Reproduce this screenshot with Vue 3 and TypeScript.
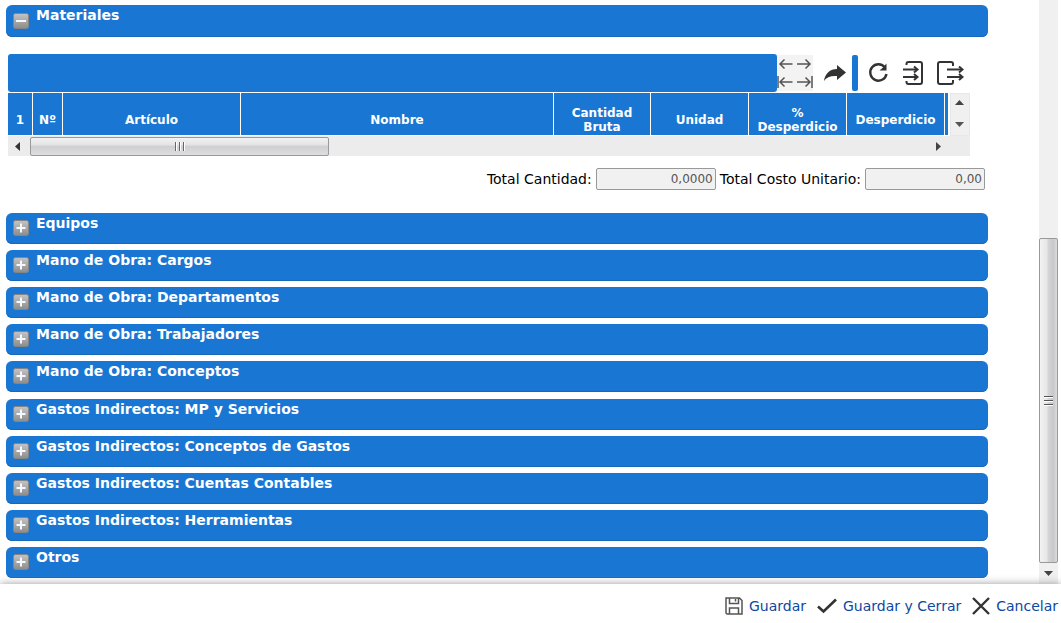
<script setup lang="ts">
import { ref } from 'vue'

interface Column {
  label: string
  kind: string
}

const columns: Column[] = [
  { label: '1', kind: 'index' },
  { label: 'Nº', kind: 'number' },
  { label: 'Artículo', kind: 'article' },
  { label: 'Nombre', kind: 'name' },
  { label: 'Cantidad\nBruta', kind: 'amount' },
  { label: 'Unidad', kind: 'measure' },
  { label: '%\nDesperdicio', kind: 'measure' },
  { label: 'Desperdicio', kind: 'measure' },
  { label: '', kind: 'rest' },
]

const sections: string[] = [
  'Equipos',
  'Mano de Obra: Cargos',
  'Mano de Obra: Departamentos',
  'Mano de Obra: Trabajadores',
  'Mano de Obra: Conceptos',
  'Gastos Indirectos: MP y Servicios',
  'Gastos Indirectos: Conceptos de Gastos',
  'Gastos Indirectos: Cuentas Contables',
  'Gastos Indirectos: Herramientas',
  'Otros',
]

const totalQuantity = ref('0,0000')
const totalCost = ref('0,00')
</script>

<template>
  <div class="screen">
    <div class="viewport">
      <main class="content">
        <button class="bar open" type="button" aria-expanded="true">
          <svg class="toggle" viewBox="0 0 16 16" aria-hidden="true">
            <defs>
              <linearGradient id="toggle-face" x1="0" y1="0" x2="0" y2="1">
                <stop offset="0" stop-color="#c4c4c4" />
                <stop offset="1" stop-color="#8c8c8c" />
              </linearGradient>
            </defs>
            <rect x="0.5" y="0.5" width="15" height="15" rx="2" fill="url(#toggle-face)" stroke="#858585" />
            <path d="M3 8H13" stroke="#f4f8ff" stroke-width="2" />
          </svg>
          <span>Materiales</span>
        </button>

        <section class="materials">
          <div class="toolbar">
            <div class="caption"></div>
            <div class="widths">
              <button type="button" aria-label="Reducir">
                <svg viewBox="0 0 18 18"><path d="M15.500 9H3M7.500 4.500L3 9L7.500 13.500" /></svg>
              </button>
              <button type="button" aria-label="Ampliar">
                <svg viewBox="0 0 18 18"><path d="M2 9H15M10.500 4.500L15 9L10.500 13.500" /></svg>
              </button>
              <button type="button" aria-label="Mínimo">
                <svg viewBox="0 0 18 18"><path d="M15.500 9H3M7.500 4.500L3 9L7.500 13.500M1 3V15" /></svg>
              </button>
              <button type="button" aria-label="Máximo">
                <svg viewBox="0 0 18 18"><path d="M2 9H15M10.500 4.500L15 9L10.500 13.500M17 3V15" /></svg>
              </button>
            </div>
            <button class="tool share" type="button" aria-label="Compartir">
              <svg width="24" height="18" viewBox="0 0 24 18">
                <path d="M14 1L23 8.500L14 16V12C8 11.500 3.500 13 1 17C2 9.500 7 5 14 5Z" fill="#333" />
              </svg>
            </button>
            <span class="divider"></span>
            <button class="tool" type="button" aria-label="Actualizar">
              <svg width="22" height="22" viewBox="0 0 22 22">
                <path d="M17 5.500A8.200 8.200 0 1 0 18.500 12" fill="none" stroke="#333" stroke-width="2.400" />
                <path d="M11.500 8.500L15 5.500L18.500 1.500V8.500Z" fill="#333" />
              </svg>
            </button>
            <button class="tool" type="button" aria-label="Importar">
              <svg width="22" height="26" viewBox="0 0 22 26" fill="none" stroke="#333" stroke-width="2">
                <path d="M4.500 5V4Q4.500 2 6.500 2H18Q20 2 20 4V22Q20 24 18 24H6.500Q4.500 24 4.500 22V21M1 9.500H15M1 17H15" />
                <path d="M12 6.500L15.500 9.500L12 12.500M12 14L15.500 17L12 20" />
              </svg>
            </button>
            <button class="tool" type="button" aria-label="Exportar">
              <svg width="28" height="26" viewBox="0 0 28 26" fill="none" stroke="#333" stroke-width="2">
                <path d="M17 6V4Q17 2 15 2H4Q2 2 2 4V22Q2 24 4 24H15Q17 24 17 22V20M11 9.500H26M11 17H26" />
                <path d="M23 6.500L26.500 9.500L23 12.500M23 14L26.500 17L23 20" />
              </svg>
            </button>
          </div>

          <div class="grid">
            <table>
              <colgroup>
                <col v-for="(column, i) in columns" :key="i" :class="column.kind" />
              </colgroup>
              <thead>
                <tr>
                  <th v-for="(column, i) in columns" :key="i" scope="col">{{ column.label }}</th>
                </tr>
              </thead>
            </table>
            <div class="vscroll">
              <svg width="9" height="5" viewBox="0 0 9 5"><path d="M4.500 0L9 5H0Z" fill="#444" /></svg>
              <svg width="9" height="5" viewBox="0 0 9 5"><path d="M0 0H9L4.500 5Z" fill="#555" /></svg>
            </div>
          </div>

          <div class="hscroll">
            <svg width="5" height="9" viewBox="0 0 5 9"><path d="M5 0V9L0 4.500Z" fill="#333" /></svg>
            <div class="track">
              <div class="thumb">
                <svg width="11" height="9" viewBox="0 0 11 9" stroke="#666">
                  <path d="M1.500 0V9M5.500 0V9M9.500 0V9" />
                  <path d="M2.500 0V9M6.500 0V9M10.500 0V9" stroke="#fff" />
                </svg>
              </div>
            </div>
            <svg width="5" height="9" viewBox="0 0 5 9"><path d="M0 0V9L5 4.500Z" fill="#444" /></svg>
          </div>
        </section>

        <div class="totals">
          <label for="total-quantity">Total Cantidad:</label>
          <input id="total-quantity" v-model="totalQuantity" type="text" readonly />
          <label for="total-cost">Total Costo Unitario:</label>
          <input id="total-cost" v-model="totalCost" type="text" readonly />
        </div>

        <div class="sections">
          <button v-for="title in sections" :key="title" class="bar" type="button" aria-expanded="false">
            <svg class="toggle" viewBox="0 0 16 16" aria-hidden="true">
              <rect x="0.5" y="0.5" width="15" height="15" rx="2" fill="url(#toggle-face)" stroke="#858585" />
              <path d="M3.500 8H12.500M8 3.500V12.500" stroke="#f4f8ff" stroke-width="2" />
            </svg>
            <span>{{ title }}</span>
          </button>
        </div>
      </main>

      <div class="page-scroll">
        <div class="page-thumb">
          <svg width="9" height="11" viewBox="0 0 9 11">
            <path d="M0 1.500H9M0 5.500H9M0 9.500H9" stroke="#555" />
            <path d="M0 2.500H9M0 6.500H9M0 10.500H9" stroke="#fff" />
          </svg>
        </div>
        <svg class="down" width="9" height="5" viewBox="0 0 9 5"><path d="M0 0H9L4.500 5Z" fill="#444" /></svg>
      </div>
    </div>

    <footer class="actions">
      <a href="#guardar">
        <svg width="18" height="18" viewBox="0 0 18 18" fill="none" stroke="#555" stroke-width="1.500">
          <path d="M1 1H14.500L17 3.500V17H2L1 16ZM4.500 1V6.500H13.500V1M10.500 2V4.500M4.500 17V11H13.500V17" />
        </svg>
        <span>Guardar</span>
      </a>
      <a href="#guardar-cerrar">
        <svg width="20" height="16" viewBox="0 0 20 16" fill="none" stroke="#333" stroke-width="2.600">
          <path d="M1 8.500L6.500 13.500L19 1.500" />
        </svg>
        <span>Guardar y Cerrar</span>
      </a>
      <a href="#cancelar">
        <svg width="18" height="18" viewBox="0 0 18 18" fill="none" stroke="#333" stroke-width="2.400">
          <path d="M1 1L17 17M17 1L1 17" />
        </svg>
        <span>Cancelar</span>
      </a>
    </footer>
  </div>
</template>

<style>
body {
  margin: 0;
  background: #fff;
}
</style>

<style scoped>
.screen {
  display: flex;
  flex-direction: column;
  min-height: 100vh;
  font-family: Verdana, "DejaVu Sans", sans-serif;
  font-size: 14px;
  color: #000;
}
.screen * {
  box-sizing: border-box;
}
button {
  font: inherit;
  border: 0;
  padding: 0;
  background: none;
  cursor: pointer;
}
svg {
  display: block;
  flex: none;
}
.viewport {
  flex: 1;
  display: flex;
  padding-right: 3px;
}
.content {
  flex: 1;
  min-width: 0;
  display: flex;
  flex-direction: column;
  padding: 5px 51px 6px 6px;
}
.bar {
  display: flex;
  align-items: flex-start;
  gap: 7px;
  width: 100%;
  height: 31px;
  padding: 0 8px 0 7px;
  border-radius: 6px;
  background: #1976d3;
  box-shadow: inset 0 -1px 0 #1768ba;
  color: #fff;
  font-size: 14px;
  font-weight: bold;
  line-height: 20px;
  text-align: left;
}
.bar.open {
  height: 32px;
}
.toggle {
  width: 16px;
  height: 16px;
  margin-top: 7px;
}
.open .toggle {
  margin-top: 8px;
}
.materials {
  margin: 17px 18px 0 2px;
}
.toolbar {
  display: flex;
  align-items: center;
  height: 38px;
  margin-bottom: 1px;
}
.caption {
  flex: 1;
  height: 38px;
  border-radius: 3px;
  background: #1976d3;
}
.widths {
  display: grid;
  grid-template-columns: 18px 18px;
  grid-template-rows: 18px 18px;
}
.widths button {
  background: #f3f3f3;
}
.widths svg {
  width: 18px;
  height: 18px;
  fill: none;
  stroke: #555;
  stroke-width: 1.5;
}
.tool {
  margin-right: 12px;
}
.share {
  margin: 0 5px 0 10px;
}
.divider {
  width: 6px;
  height: 36px;
  margin-right: 10px;
  border-radius: 2px;
  background: #1976d3;
}
.tool:last-child {
  margin-right: 6px;
}
.grid {
  display: flex;
  gap: 2px;
  height: 43px;
}
table {
  flex: 1;
  width: 100%;
  height: 42px;
  table-layout: fixed;
  border-collapse: separate;
  border-spacing: 0;
}
.index {
  width: 25px;
}
.number {
  width: 30px;
}
.article {
  width: 178px;
}
.amount {
  width: 97px;
}
.measure {
  width: 98px;
}
.rest {
  width: 3px;
}
th {
  height: 42px;
  padding: 12px 0 0;
  border-right: 1px solid #fff;
  background: #1976d3;
  color: #fff;
  font-size: 12px;
  line-height: 14px;
  vertical-align: middle;
  white-space: pre-line;
}
th:last-child {
  border-right: 0;
}
.vscroll {
  display: flex;
  flex-direction: column;
  align-items: center;
  justify-content: space-between;
  width: 20px;
  padding: 6px 1px 8px 0;
  border: 1px solid #e8e8e8;
  background: #f0f0f0;
}
.hscroll {
  display: flex;
  align-items: center;
  height: 20px;
  padding: 0 29px 0 7px;
  background: #ececec;
}
.track {
  flex: 1;
  padding: 0 0 0 10px;
}
.thumb {
  display: flex;
  align-items: center;
  justify-content: center;
  width: 33%;
  height: 19px;
  border: 1px solid #999;
  border-radius: 2px;
  background: linear-gradient(#f2f2f2, #e4e4e5 40%, #cfcfd1 50%, #dedee0);
}
.totals {
  display: flex;
  align-items: center;
  justify-content: flex-end;
  gap: 4px;
  margin: 12px 3px 23px 0;
  line-height: 20px;
}
.totals input {
  width: 120px;
  height: 22px;
  padding: 0 2px;
  border: 1px solid #999;
  border-radius: 2px;
  background: #f1f1f1;
  color: #555;
  font: 12px Verdana, "DejaVu Sans", sans-serif;
  text-align: right;
}
.sections {
  flex: 1;
  display: flex;
  flex-direction: column;
  justify-content: space-between;
  gap: 6px;
}
.page-scroll {
  display: flex;
  flex-direction: column;
  align-items: center;
  width: 19px;
  background: #f0f0f0;
}
.page-thumb {
  display: flex;
  align-items: center;
  justify-content: center;
  width: 19px;
  height: 325px;
  margin-top: auto;
  border: 1px solid #999;
  border-radius: 2px;
  background: linear-gradient(90deg, #f3f3f3, #e6e6e7 40%, #d4d4d7 50%, #c8c8cc 80%, #dedee0);
}
.down {
  margin: 8px 0;
}
.actions {
  display: flex;
  align-items: center;
  justify-content: flex-end;
  gap: 11px;
  height: 39px;
  padding: 5px 3px 0;
  background: #fff;
  box-shadow: 0 0 8px #999;
}
.actions a {
  display: flex;
  align-items: center;
  gap: 6px;
  color: #0d47a1;
  font-size: 14px;
  line-height: 20px;
  text-decoration: none;
}
</style>
